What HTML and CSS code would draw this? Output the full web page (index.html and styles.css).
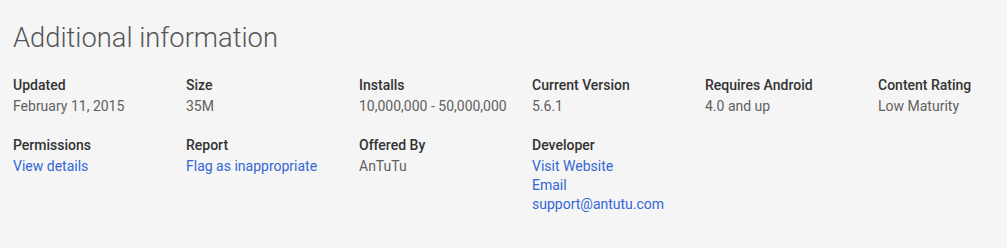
FILE: index.html
```html
<!DOCTYPE html>
<html lang="en">
<head>
  <meta charset="UTF-8" />
  <title>Additional information</title>
  <link rel="stylesheet" href="styles.css">
</head>
<body>
  <div class="details">
    <h1 class="heading">Additional information</h1>
    <div class="meta">
      <div class="meta-item">
        <div class="title">Updated</div>
        <div class="content">February 11, 2015</div>
      </div>
      <div class="meta-item">
        <div class="title">Size</div>
        <div class="content">35M</div>
      </div>
      <div class="meta-item">
        <div class="title">Installs</div>
        <div class="content">10,000,000 - 50,000,000</div>
      </div>
      <div class="meta-item">
        <div class="title">Current Version</div>
        <div class="content">5.6.1</div>
      </div>
      <div class="meta-item">
        <div class="title">Requires Android</div>
        <div class="content">4.0 and up</div>
      </div>
      <div class="meta-item">
        <div class="title">Content Rating</div>
        <div class="content">Low Maturity</div>
      </div>
      <div class="meta-item">
        <div class="title">Permissions</div>
        <a class="content link" href="#">View details</a>
      </div>
      <div class="meta-item">
        <div class="title">Report</div>
        <a class="content link" href="#">Flag as inappropriate</a>
      </div>
      <div class="meta-item">
        <div class="title">Offered By</div>
        <div class="content">AnTuTu</div>
      </div>
      <div class="meta-item">
        <div class="title">Developer</div>
        <a class="content link" href="#">Visit Website</a>
        <a class="content link" href="#">Email</a>
        <a class="content link" href="#">support@antutu.com</a>
      </div>
    </div>
  </div>
</body>
</html>
```

FILE: styles.css
```css
body {
  margin: 0;
  padding: 0;
  background-color: #f5f5f5;
  font-family: Roboto, Arial, sans-serif;
  color: #333;
}

.details {
  padding: 20px 13px 0 13px;
}

.heading {
  font-family: "Roboto Light", Roboto, Arial, sans-serif;
  font-size: 27.3px;
  font-weight: 300;
  line-height: 36px;
  margin: 0 0 18px 0;
  color: #555;
}

.meta {
  display: grid;
  grid-template-columns: repeat(6, 173px);
  row-gap: 18px;
}

.title {
  font-size: 14px;
  font-weight: 500;
  line-height: 23px;
  color: #333;
}

.content {
  display: block;
  font-size: 14px;
  line-height: 19px;
  color: #616161;
  text-decoration: none;
}

.link {
  color: #3367d6;
}
```
